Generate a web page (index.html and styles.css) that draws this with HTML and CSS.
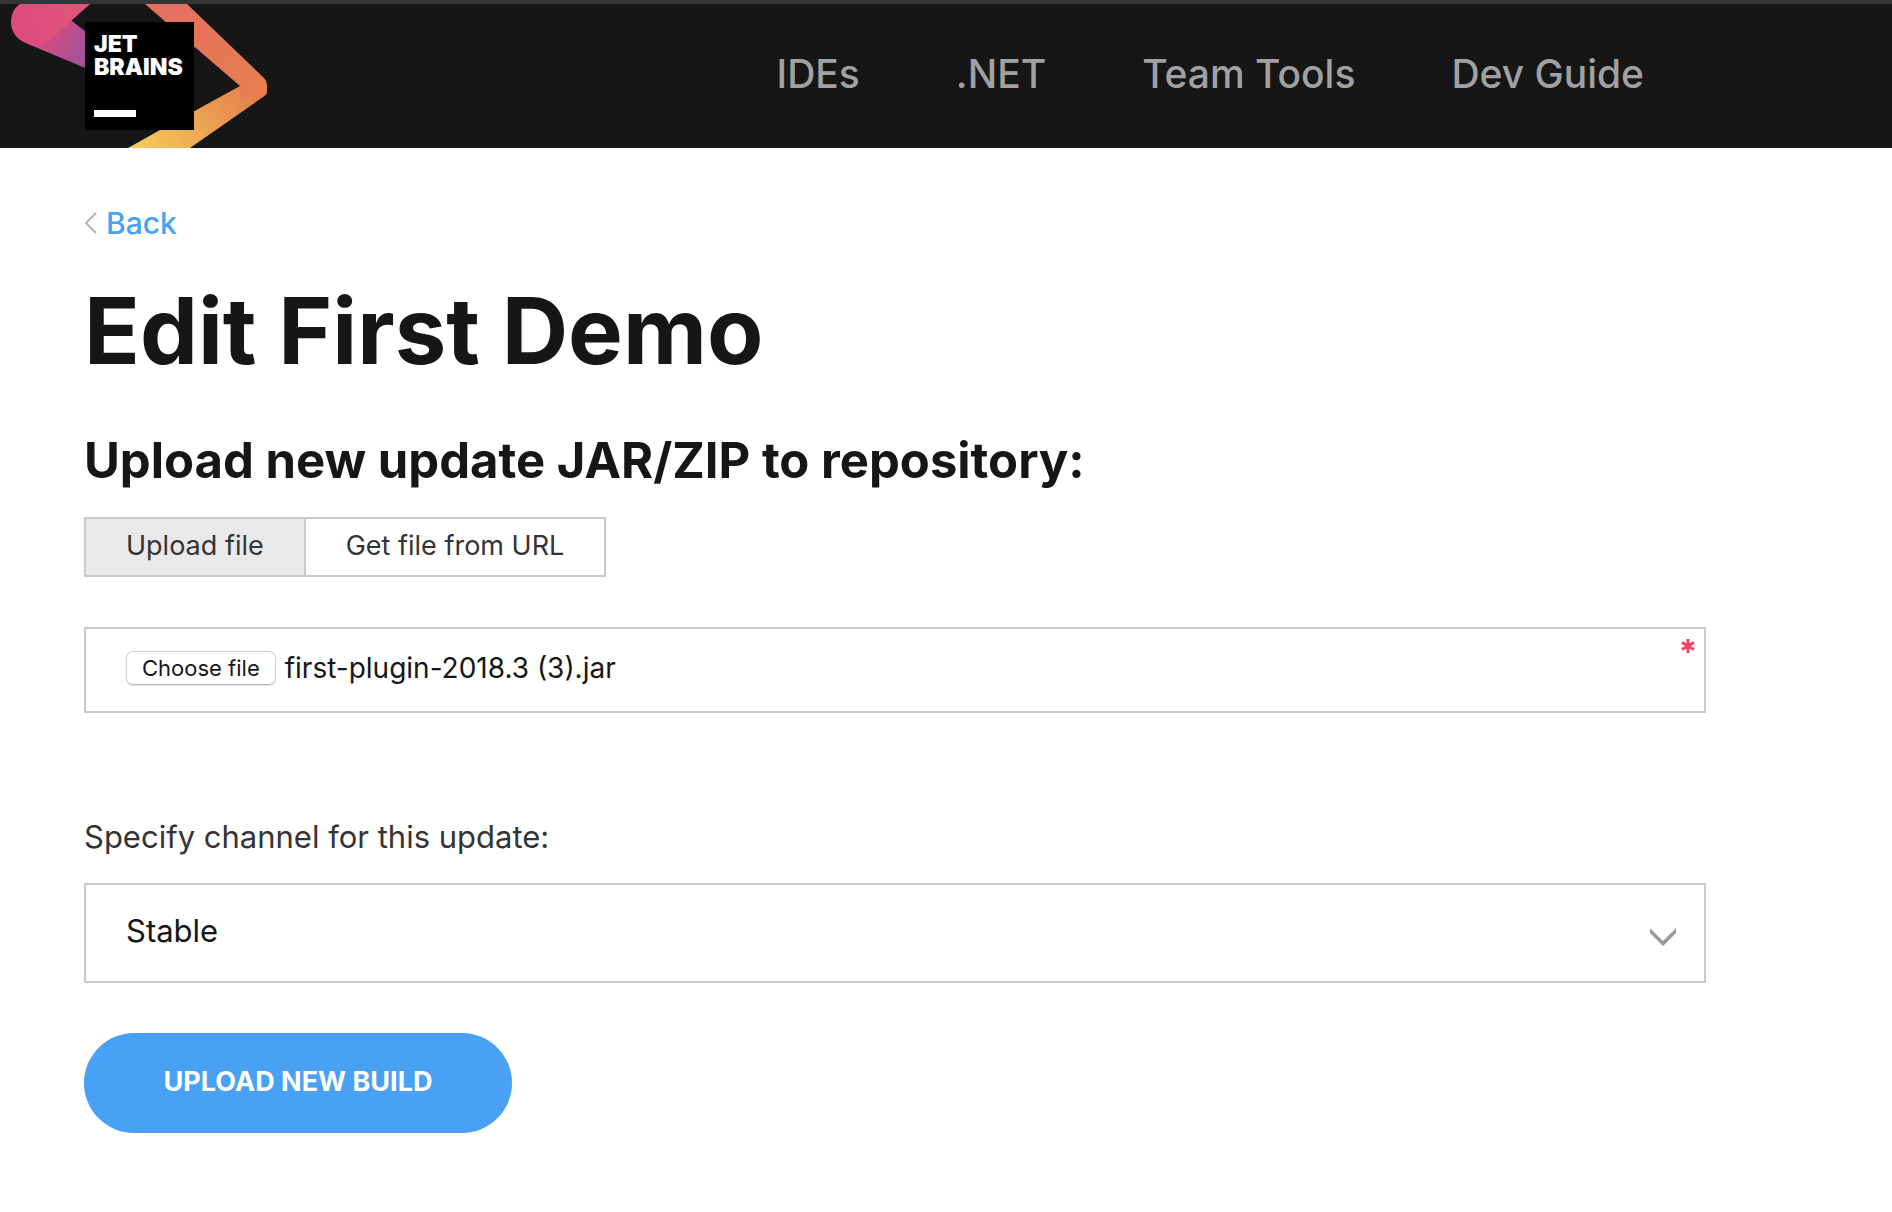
FILE: index.html
```html
<!DOCTYPE html>
<html lang="en">
<head>
<meta charset="utf-8">
<meta name="viewport" content="width=device-width, initial-scale=1">
<title>Edit First Demo</title>
<link rel="stylesheet" href="styles.css">
</head>
<body>
<header class="header">
  <a class="logo" href="#" aria-label="JetBrains">
    <svg class="logo-art" width="272" height="144" viewBox="0 4 272 144">
      <defs>
        <linearGradient id="violet" gradientUnits="userSpaceOnUse" x1="42" y1="30" x2="92" y2="58">
          <stop offset="0" stop-color="#d94b80"/>
          <stop offset="1" stop-color="#99549b"/>
        </linearGradient>
        <linearGradient id="pink" gradientUnits="userSpaceOnUse" x1="20" y1="40" x2="90" y2="4">
          <stop offset="0" stop-color="#e04a80"/>
          <stop offset="1" stop-color="#de5878"/>
        </linearGradient>
        <linearGradient id="orange" gradientUnits="userSpaceOnUse" x1="150" y1="4" x2="262" y2="90">
          <stop offset="0" stop-color="#e56e63"/>
          <stop offset="1" stop-color="#e67f4d"/>
        </linearGradient>
        <linearGradient id="yellow" gradientUnits="userSpaceOnUse" x1="245" y1="84" x2="145" y2="148">
          <stop offset="0" stop-color="#e6804d"/>
          <stop offset="1" stop-color="#f4c75a"/>
        </linearGradient>
      </defs>
      <path fill="url(#violet)" d="M72 21 L90 35 V70 L28 44 L40 24Z"/>
      <path fill="url(#pink)" d="M20 4 H90 L50 40 Q40 49 28 44 C17 40 11 32 11 22 C11 14 14 8 20 4Z"/>
      <path fill="url(#yellow)" d="M128 148 L160 130 L240 86 L267 84 V93 Q266 95 263 97 L190 148Z"/>
      <path fill="url(#orange)" d="M145 4 H187 L264 78 Q267 81 267 85 V93 L240 98 L240 86Z"/>
      <path fill="#000" d="M85 22H194V130H85Z"/>
      <path fill="#fff" d="M94 110H136V117H94Z"/>
      <text class="logo-text"><tspan x="94" y="52">JET</tspan><tspan x="94" y="75">BRAINS</tspan></text>
    </svg>
  </a>
  <nav class="nav">
    <a href="#">IDEs</a>
    <a href="#">.NET</a>
    <a href="#">Team Tools</a>
    <a href="#">Dev Guide</a>
  </nav>
</header>
<main class="page">
  <a class="back" href="#">
    <svg width="13" height="22" viewBox="0 0 13 22" fill="none" stroke="#b3b3b3" stroke-width="2"><path d="M12 1L2 11l10 10"/></svg>
    Back
  </a>
  <h1 class="title">Edit First Demo</h1>
  <form class="form">
    <h2 class="subtitle">Upload new update JAR/ZIP to repository:</h2>
    <div class="tabs">
      <button class="tab tab-active" type="button">Upload file</button>
      <button class="tab" type="button">Get file from URL</button>
    </div>
    <div class="file-field">
      <input class="file-input" id="plugin-file" type="file" required>
      <label class="file-button" for="plugin-file">Choose file</label>
      <span class="file-name">first-plugin-2018.3 (3).jar</span>
      <svg class="required" width="14" height="14" viewBox="0 0 14 14" stroke="#ee4060" stroke-width="3"><path d="M7 0V14M1 3.500L13 10.500M13 3.500L1 10.500"/></svg>
    </div>
    <label class="channel-label" for="channel">Specify channel for this update:</label>
    <div class="select-wrap">
      <select class="select" id="channel"><option>Stable</option></select>
      <svg class="chevron" width="26" height="18" viewBox="0 0 26 18"><path fill="#999" d="M0 0L13 13L26 0V5L13 18L0 5Z"/></svg>
    </div>
    <button class="submit" type="submit">UPLOAD NEW BUILD</button>
  </form>
</main>
</body>
</html>
```
FILE: styles.css
```css
* {
  box-sizing: border-box;
}

body {
  margin: 0;
  background: #fff;
  color: #161616;
  font-family: Inter, "Liberation Sans", sans-serif;
}

.header {
  display: flex;
  justify-content: space-between;
  height: 148px;
  padding-right: 248px;
  border-top: 4px solid #333639;
  background: #161616;
}

.logo,
.logo-art {
  display: block;
}

.logo-text {
  fill: #fff;
  font-size: 23px;
  font-weight: 900;
}

.nav {
  display: flex;
  align-items: center;
  gap: 96px;
  padding-bottom: 4px;
  font-size: 39px;
  font-weight: 500;
  line-height: 48px;
}

.nav a {
  color: #a1a1a1;
  text-decoration: none;
}

.page {
  padding: 55px 186px 64px 84px;
}

.back {
  display: inline-flex;
  align-items: center;
  gap: 9px;
  color: #48a1f4;
  font-size: 30px;
  font-weight: 500;
  line-height: 40px;
  text-decoration: none;
}

.title {
  margin: 32px 0 0;
  font-size: 92px;
  font-weight: 700;
  line-height: 112px;
}

.subtitle {
  margin: 44px 0 26px;
  font-size: 49px;
  font-weight: 700;
  line-height: 60px;
}

.form {
  display: flex;
  flex-direction: column;
  align-items: flex-start;
}

.tabs {
  display: flex;
}

.tab {
  height: 60px;
  padding: 0 40px 2px;
  border: 2px solid #c9c9c9;
  background: #fff;
  color: #343434;
  font: 400 27px/32px Inter, "Liberation Sans", sans-serif;
}

.tab + .tab {
  border-left: 0;
}

.tab-active {
  background: #e9e9eb;
}

.file-field {
  position: relative;
  display: flex;
  align-items: center;
  gap: 9px;
  width: 100%;
  height: 86px;
  margin-top: 50px;
  padding: 0 40px 4px;
  border: 2px solid #c9c9c9;
}

.file-input {
  position: absolute;
  width: 1px;
  height: 1px;
  opacity: 0;
}

.file-button {
  padding: 0 15px;
  border: 1px solid #d2d2d2;
  border-bottom-color: #b8b8b8;
  border-radius: 7px;
  box-shadow: 0 1px 1px #ddd;
  font-size: 22px;
  line-height: 32px;
}

.file-name {
  font-size: 28px;
  line-height: 32px;
}

.required {
  position: absolute;
  top: 10px;
  right: 9px;
}

.channel-label {
  margin: 104px 0 26px;
  color: #343434;
  font-size: 31px;
  line-height: 40px;
}

.select-wrap {
  position: relative;
  width: 100%;
}

.select {
  display: block;
  width: 100%;
  height: 100px;
  padding: 0 40px 4px;
  border: 2px solid #c9c9c9;
  border-radius: 0;
  appearance: none;
  background: #fff;
  color: #161616;
  font: 400 31px/40px Inter, "Liberation Sans", sans-serif;
}

.chevron {
  position: absolute;
  top: 45px;
  right: 30px;
  pointer-events: none;
}

.submit {
  min-width: 428px;
  height: 100px;
  margin-top: 50px;
  padding: 0 70px 2px;
  border: 0;
  border-radius: 50px;
  background: #48a1f4;
  color: #fff;
  font: 700 27px/32px Inter, "Liberation Sans", sans-serif;
}
```
